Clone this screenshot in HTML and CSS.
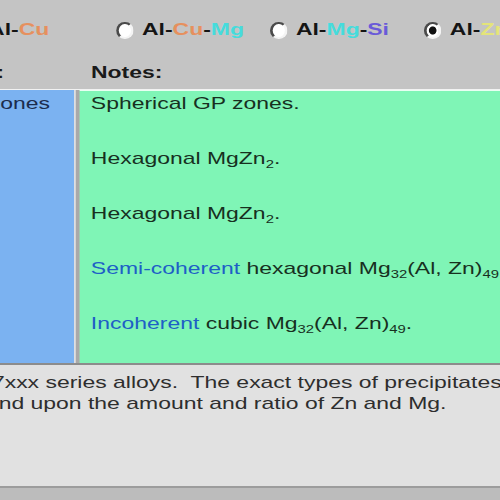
FILE: index.html
```html
<!DOCTYPE html>
<html>
<head>
<meta charset="utf-8">
<link rel="stylesheet" href="styles.css">
</head>
<body>
<div class="screen">
  <div class="top">
    <div class="radios">
      <div class="ritem"><span class="radio"></span><span class="rlabel">Al-<span class="cu">Cu</span></span></div>
      <div class="ritem"><span class="radio"></span><span class="rlabel">Al-<span class="cu">Cu</span>-<span class="mg">Mg</span></span></div>
      <div class="ritem"><span class="radio"></span><span class="rlabel">Al-<span class="mg">Mg</span>-<span class="si">Si</span></span></div>
      <div class="ritem"><span class="radio on"></span><span class="rlabel">Al-<span class="zn">Zn</span>-<span class="mg">Mg</span></span></div>
    </div>
    <div class="labels">
      <span class="lab-left">Precipitates:</span>
      <span class="lab-notes">Notes:</span>
    </div>
  </div>
  <div class="table">
    <div class="col-left">
      <div class="cell-left">GP zones</div>
    </div>
    <div class="sep"></div>
    <div class="col-notes">
      <div class="note">Spherical GP zones.</div>
      <div class="note">Hexagonal MgZn<sub class="sub">2</sub>.</div>
      <div class="note">Hexagonal MgZn<sub class="sub">2</sub>.</div>
      <div class="note"><span class="hl">Semi-coherent</span> hexagonal Mg<sub class="sub">32</sub>(Al, Zn)<sub class="sub">49</sub>.</div>
      <div class="note"><span class="hl">Incoherent</span> cubic Mg<sub class="sub">32</sub>(Al, Zn)<sub class="sub">49</sub>.</div>
    </div>
  </div>
  <div class="desc">
    <div class="dline first">7xxx series alloys.  The exact types of precipitates</div>
    <div class="dline second">nd upon the amount and ratio of Zn and Mg.</div>
  </div>
  <div class="footer"></div>
</div>
</body>
</html>
```
FILE: styles.css
```css
html, body {
  margin: 0;
  padding: 0;
  width: 500px;
  height: 500px;
  overflow: hidden;
  background: #bdbdbd;
}
.screen {
  width: 371px;
  height: 500px;
  transform: scaleX(1.35);
  transform-origin: 0 0;
  font-family: "Liberation Sans", Arial, sans-serif;
  font-size: 17px;
  display: flex;
  flex-direction: column;
}
.top {
  height: 89px;
  box-sizing: border-box;
  padding-top: 20px;
  background: #c4c4c4;
  flex: none;
}
.radios {
  display: flex;
  margin-left: -28px;
  height: 20px;
}
.ritem {
  width: 114px;
  flex: none;
  display: flex;
  align-items: center;
  gap: 6.6px;
}
.radio {
  width: 12.6px;
  height: 17px;
  box-sizing: border-box;
  border-radius: 50%;
  background: #fff;
  border: 2px solid;
  border-color: #4a4a4a #f4f4f4 #f4f4f4 #4a4a4a;
  flex: none;
}
.radio.on {
  background: radial-gradient(closest-side, #111 0 55%, #fff 70%);
}
.rlabel {
  font-weight: bold;
  line-height: 20px;
  white-space: nowrap;
  color: #141414;
}
.cu { color: #e6905e; }
.mg { color: #45dcdc; }
.si { color: #6a5ad8; }
.zn { color: #e4e47a; }
.labels {
  display: flex;
  margin-left: -99px;
  margin-top: 23px;
  font-weight: bold;
  line-height: 20px;
  color: #1a1a1a;
}
.lab-left {
  width: 166.4px;
  flex: none;
  white-space: nowrap;
}
.lab-notes {
  white-space: nowrap;
}
.table {
  display: grid;
  grid-template-columns: 55px 4.3px minmax(0, 1fr);
  height: 276px;
  box-sizing: border-box;
  border-top: 1px solid #f2f2f2;
  border-bottom: 2px solid #8c8c8c;
  flex: none;
}
.col-left {
  background: #7bb2f1;
  display: flex;
  justify-content: flex-end;
  align-items: flex-start;
  padding: 4px 18px 0 0;
  overflow: hidden;
}
.cell-left {
  white-space: nowrap;
  line-height: 20px;
  color: #1b2c4e;
  flex: none;
}
.sep {
  background: #a9a9a9;
  border-left: 1px solid #f0f0f0;
  box-sizing: border-box;
}
.col-notes {
  background: #7ff5b6;
  border-top: 1px solid #e8fff2;
  padding: 3px 0 0 8px;
  overflow: hidden;
  color: #17301f;
}
.note {
  line-height: 20px;
  white-space: nowrap;
  margin-bottom: 35px;
}
.sub {
  font-size: 11px;
  vertical-align: -4px;
  line-height: 0;
}
.hl {
  color: #1e5fc6;
}
.desc {
  height: 121px;
  box-sizing: border-box;
  background: #e1e1e1;
  padding-top: 7px;
  color: #2e2e2e;
  overflow: hidden;
  flex: none;
}
.dline {
  line-height: 21px;
  white-space: pre;
}
.dline.first { margin-left: -6px; }
.dline.second { margin-left: -1px; }
.footer {
  flex: 1;
  border-top: 2px solid #9c9c9c;
  background: #bcbcbc;
}
```
